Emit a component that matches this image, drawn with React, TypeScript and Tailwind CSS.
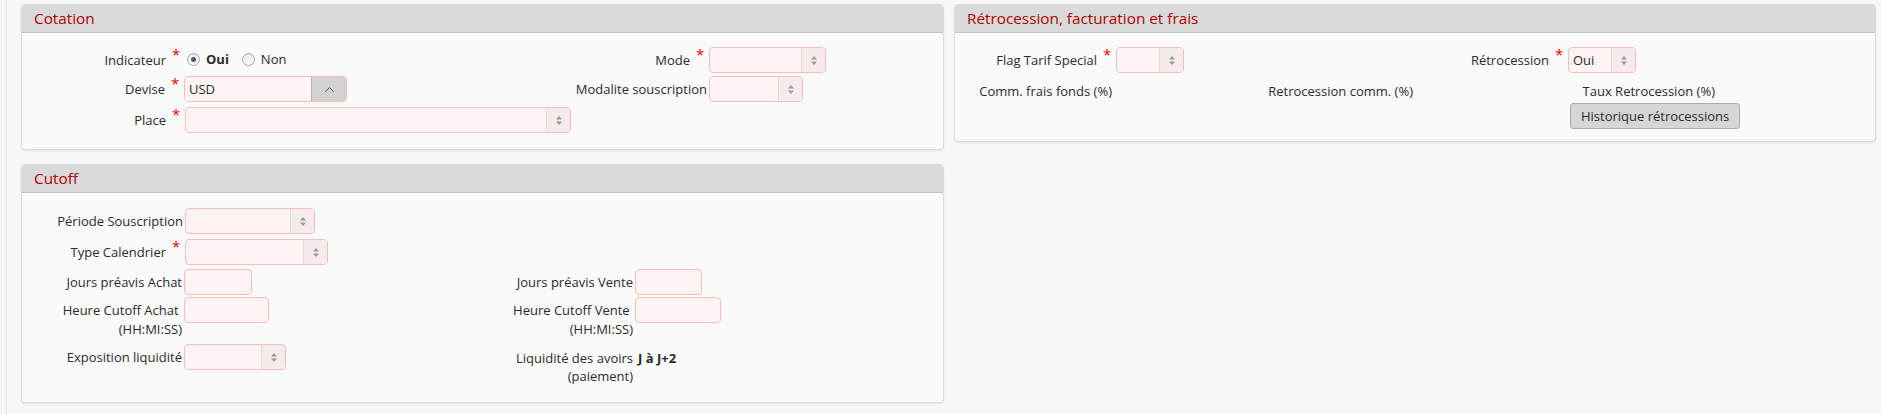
import { ChevronUp } from "lucide-react";
import type { ReactNode } from "react";

function Panel({ title, children }: { title: string; children: ReactNode }) {
  return (
    <div className="overflow-hidden rounded-[4px] border border-[#dcdcdc] bg-[#fafafa] shadow-[0_1px_2px_rgba(0,0,0,0.08)]">
      <div className="flex h-[28px] items-center border-b border-[#c4c4c4] bg-[#dadada] pl-[12px] text-[15.3px] text-[#b00000]">
        {title}
      </div>
      {children}
    </div>
  );
}

function Label({ text, required, width }: { text: ReactNode; required?: boolean; width: string }) {
  return (
    <div className={`flex shrink-0 justify-end text-right ${width}`}>
      <span className={`pt-[4px] leading-[18px] ${required ? "" : "pr-[2px]"}`}>{text}</span>
      {required && <span className="w-[19px] pl-[6px] text-left text-[15px] leading-[15px] text-[#f00]">*</span>}
    </div>
  );
}

function Spinner() {
  return (
    <div className="flex w-[24px] shrink-0 items-center justify-center border-l border-[#f0d6d6] bg-[#f6ebeb]">
      <svg width="6" height="9" viewBox="0 0 6 9">
        <path d="M3 0L6 3.5H0Z M3 9L0 5.5H6Z" fill="#9a9a9a" />
      </svg>
    </div>
  );
}

function Input({ width, value, select }: { width: string; value?: string; select?: boolean }) {
  return (
    <div className={`flex h-[26px] shrink-0 overflow-hidden rounded-[4px] border border-[#f7bcbc] bg-[#fff4f4] ${width}`}>
      <div className="flex-1 pl-[4px] leading-[24px]">{value}</div>
      {select && <Spinner />}
    </div>
  );
}

function Radio({ checked }: { checked?: boolean }) {
  return (
    <span className="flex h-[13px] w-[13px] items-center justify-center rounded-full border border-[#a6a6a6] bg-gradient-to-b from-[#e9e9e9] to-[#fbfbfb]">
      {checked && <span className="h-[5px] w-[5px] rounded-full bg-[#555]" />}
    </span>
  );
}

export default function App() {
  return (
    <div className="h-[414px] w-full bg-[#f6f6f6] text-[13px] text-[#2b2b2b] [font-family:'Open_Sans',Arial,sans-serif]">
      <div className="ml-[6px] flex h-full gap-[10px] border-l border-[#e4e4e4] bg-[#f7f7f7] pl-[14px] pr-[5px] pt-[4px]">
        {/* colonne gauche */}
        <div className="flex w-[923px] shrink-0 flex-col gap-[14px]">
          <Panel title="Cotation">
            <div className="flex pb-[16px] pt-[14px]">
              <div className="flex w-[524px] shrink-0 flex-col">
                <div className="flex h-[26px]">
                  <Label text="Indicateur" required width="w-[163px]" />
                  <div className="ml-[2px] flex items-center pb-[1px]">
                    <Radio checked />
                    <span className="ml-[6px] font-bold">Oui</span>
                    <span className="ml-[13px]">
                      <Radio />
                    </span>
                    <span className="ml-[6px]">Non</span>
                  </div>
                </div>
                <div className="mt-[3px] flex h-[26px]">
                  <Label text="Devise" required width="w-[162px]" />
                  <div className="flex h-[26px] w-[163px] overflow-hidden rounded-[4px] border border-[#f7bcbc]">
                    <div className="flex-1 bg-[#fff4f4] pl-[4px] leading-[24px]">USD</div>
                    <div className="flex w-[35px] items-center justify-center border-l border-[#b4b4b4] bg-[#d2d2d2]">
                      <ChevronUp size={15} strokeWidth={1.4} color="#3a3a3a" />
                    </div>
                  </div>
                </div>
                <div className="mt-[5px] flex h-[26px]">
                  <Label text="Place" required width="w-[163px]" />
                  <Input width="w-[386px]" select />
                </div>
              </div>
              <div className="flex flex-col">
                <div className="flex h-[26px]">
                  <Label text="Mode" required width="w-[163px]" />
                  <Input width="w-[117px]" select />
                </div>
                <div className="mt-[3px] flex h-[26px]">
                  <Label text="Modalite souscription" width="w-[163px]" />
                  <Input width="w-[94px]" select />
                </div>
              </div>
            </div>
          </Panel>

          <Panel title="Cutoff">
            <div className="flex flex-col pb-[17px] pt-[15px]">
              <div className="flex h-[26px]">
                <Label text="Période Souscription" width="w-[163px]" />
                <Input width="w-[130px]" select />
              </div>
              <div className="mt-[5px] flex h-[26px]">
                <Label text="Type Calendrier" required width="w-[163px]" />
                <Input width="w-[143px]" select />
              </div>
              <div className="mt-[4px] flex">
                <div className="flex w-[450px] shrink-0">
                  <Label text="Jours préavis Achat" width="w-[162px]" />
                  <Input width="w-[68px]" />
                </div>
                <div className="flex">
                  <Label text="Jours préavis Vente" width="w-[163px]" />
                  <Input width="w-[67px]" />
                </div>
              </div>
              <div className="mt-[2px] flex">
                <div className="flex w-[450px] shrink-0">
                  <Label
                    text={
                      <span className="leading-[19px]">
                        Heure Cutoff Achat&nbsp;
                        <br />
                        (HH:MI:SS)
                      </span>
                    }
                    width="w-[162px]"
                  />
                  <Input width="w-[85px]" />
                </div>
                <div className="flex">
                  <Label
                    text={
                      <span className="leading-[19px]">
                        Heure Cutoff Vente&nbsp;
                        <br />
                        (HH:MI:SS)
                      </span>
                    }
                    width="w-[163px]"
                  />
                  <Input width="w-[86px]" />
                </div>
              </div>
              <div className="mt-[5px] flex">
                <div className="flex w-[450px] shrink-0">
                  <Label text="Exposition liquidité" width="w-[162px]" />
                  <Input width="w-[102px]" select />
                </div>
                <div className="flex">
                  <Label
                    text={
                      <span className="inline-block pt-[1px]">
                        Liquidité des avoirs
                        <br />
                        (paiement)
                      </span>
                    }
                    width="w-[163px]"
                  />
                  <span className="ml-[3px] pt-[5px] leading-[18px] font-bold">J à J+2</span>
                </div>
              </div>
            </div>
          </Panel>
        </div>

        {/* colonne droite */}
        <div className="flex w-[922px] shrink-0 flex-col">
          <Panel title="Rétrocession, facturation et frais">
            <div className="flex flex-col pb-[12px] pt-[14px]">
              <div className="flex h-[26px]">
                <div className="flex w-[452px] shrink-0">
                  <Label text="Flag Tarif Special" required width="w-[161px]" />
                  <Input width="w-[68px]" select />
                </div>
                <div className="flex">
                  <Label text="Rétrocession" required width="w-[161px]" />
                  <Input width="w-[68px]" value="Oui" select />
                </div>
              </div>
              <div className="mt-[5px] grid h-[26px] grid-cols-[301px_301px_301px]">
                <Label text="Comm. frais fonds (%)" width="w-[159px]" />
                <Label text="Retrocession comm. (%)" width="w-[159px]" />
                <Label text="Taux Retrocession (%)" width="w-[160px]" />
              </div>
              <div className="-mt-[1px] ml-[615px]">
                <button className="h-[26px] rounded-[3px] border border-[#ababab] bg-[#d6d6d6] px-[10px] leading-[22px] text-[#2b2b2b]">
                  Historique rétrocessions
                </button>
              </div>
            </div>
          </Panel>
        </div>
      </div>
    </div>
  );
}
